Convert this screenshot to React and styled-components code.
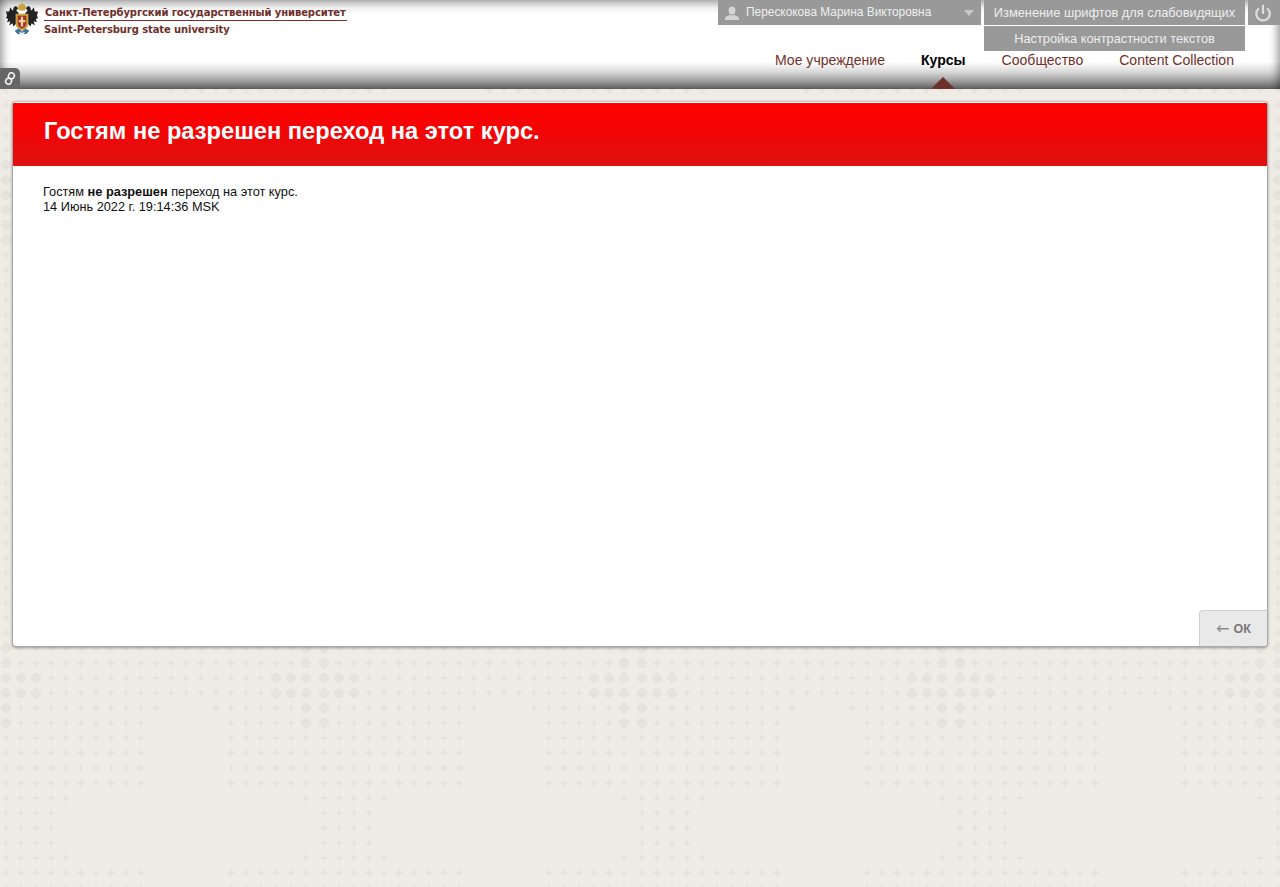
import React from "react";
import styled, { createGlobalStyle } from "styled-components";
import { Power } from "lucide-react";

// wallpaper tile: 21 x 32 cells of plus signs and clovers
const plus = (x, y) =>
  `M${x - 1} ${y - 3.5}v2.5h-2.5v2h2.5v2.5h2v-2.5h2.5v-2h-2.5v-2.5z`;
const lobe = (x, y, r) =>
  `M${x - r} ${y}a${r} ${r} 0 1 0 ${2 * r} 0a${r} ${r} 0 1 0 ${-2 * r} 0z`;
const clover = (x, y) =>
  `M${x - 3} ${y - 3}v6h6v-6z` +
  lobe(x - 2.4, y, 3) +
  lobe(x + 2.4, y, 3) +
  lobe(x, y - 2.4, 3) +
  lobe(x, y + 2.4, 3);

const inRange = (c, ranges) => ranges.some(([a, b]) => c >= a && c <= b);

function cellKind(r, c) {
  const sides = [[0, 9], [15, 20]];
  if (r === 11 || r === 12) return c === 0 || c === 20 ? "c" : "p";
  if (r === 13 || r === 14) return c <= 2 || c >= 18 ? "c" : "p";
  if (r === 15) {
    if (c === 0 || c === 20) return "c";
    return inRange(c, [[1, 10], [14, 19]]) ? "p" : "";
  }
  if (r === 16) {
    if (c === 0 || c === 20) return "c";
    return inRange(c, sides) ? "p" : "";
  }
  if (r === 21 || r === 25) return inRange(c, [[0, 4], [20, 20]]) ? "p" : "";
  if (r >= 22 && r <= 24) return c <= 3 ? "p" : "";
  if (r === 6) return inRange(c, [[0, 4], [11, 20]]) ? "p" : "";
  return inRange(c, sides) ? "p" : "";
}

function buildWallpaper() {
  let d = "";
  for (let r = 0; r < 32; r++) {
    for (let c = 0; c < 21; c++) {
      const kind = cellKind(r, c);
      if (kind === "p") d += plus(6 + c * 15, 6 + r * 15);
      if (kind === "c") d += clover(6 + c * 15, 6 + r * 15);
    }
  }
  const svg = `<svg xmlns="http://www.w3.org/2000/svg" width="318" height="483"><path fill="#e6e3dc" d="${d}"/></svg>`;
  return `url("data:image/svg+xml,${encodeURIComponent(svg)}")`;
}

const GlobalStyle = createGlobalStyle`
  html, body {
    margin: 0;
    padding: 0;
  }
  body {
    min-height: 887px;
    background-color: #efece5;
    background-image: ${buildWallpaper()};
    background-position: 0 -6px;
    font-family: "Liberation Sans", Arial, sans-serif;
    font-size: 12.75px;
    color: #111;
  }
`;

const Header = styled.header`
  height: 89px;
  display: flex;
  justify-content: space-between;
  background: linear-gradient(#b4b4b4 0, #f0f0f0 8px, #fff 14px, #fff 62px, #d8d8d8 72px, #a5a5a5 80px, #5e5e5e 89px);
  box-shadow: inset 10px 0 10px -8px rgba(0, 0, 0, 0.45),
    inset -10px 0 10px -8px rgba(0, 0, 0, 0.45);
`;

const Brand = styled.div`
  display: flex;
  flex-direction: column;
  justify-content: space-between;
`;

const Logo = styled.a`
  display: flex;
  gap: 6px;
  padding: 3px 0 0 6px;
`;

const LogoText = styled.div`
  width: 303px;
  padding-top: 2px;
  font-family: "DejaVu Sans", Verdana, sans-serif;
  font-size: 10px;
  font-weight: bold;
  color: #6e2f2a;
`;

const LogoLine = styled.div`
  line-height: ${props => (props.$first ? "15px" : "17px")};
  white-space: nowrap;
  padding-left: ${props => (props.$first ? "1px" : "0")};
  letter-spacing: ${props => (props.$first ? "-0.1px" : "-0.1px")};
  border-bottom: ${props => (props.$first ? "1px solid #7d2f2a" : "none")};
`;

const LinkTab = styled.a`
  width: 20px;
  height: 21px;
  display: flex;
  align-items: center;
  justify-content: center;
  background: #666;
  border-top-right-radius: 5px;
`;

const Side = styled.div`
  display: flex;
  flex-direction: column;
  align-items: flex-end;
`;

const TopBar = styled.div`
  display: flex;
  align-items: flex-start;
  gap: 3px;
  height: 51px;
`;

const GreyBar = styled.div`
  height: 25px;
  background: #999;
  color: #eee;
  display: flex;
  align-items: center;
`;

const UserMenu = styled(GreyBar)`
  width: 263px;
  box-sizing: border-box;
  padding: 0 7px;
  font-size: 11.9px;
  gap: 7px;
`;

const UserName = styled.span`
  flex: 1;
  white-space: nowrap;
  padding-bottom: 2px;
`;

const Caret = styled.span`
  width: 0;
  height: 0;
  border-left: 5px solid transparent;
  border-right: 5px solid transparent;
  border-top: 6px solid #c8c8c8;
`;

const A11yStack = styled.div`
  display: flex;
  flex-direction: column;
  gap: 1px;
`;

const A11yButton = styled(GreyBar)`
  width: 261px;
  justify-content: center;
  font-size: 12.8px;
  white-space: nowrap;
`;

const PowerButton = styled(GreyBar)`
  width: 32px;
  padding-right: 2px;
  box-sizing: border-box;
  justify-content: center;
  color: #dedede;
`;

const Nav = styled.nav`
  display: flex;
  padding-right: 28px;
`;

const NavItem = styled.a`
  position: relative;
  height: 38px;
  padding: 1px 18px 0;
  box-sizing: border-box;
  font-size: 14.05px;
  line-height: 16px;
  white-space: nowrap;
  color: ${props => (props.$active ? "#000" : "#73302a")};
  font-weight: ${props => (props.$active ? "bold" : "normal")};

  ${props =>
    props.$active &&
    `&::after {
      content: "";
      position: absolute;
      left: 50%;
      bottom: 0;
      margin-left: -12px;
      border-left: 12px solid transparent;
      border-right: 12px solid transparent;
      border-bottom: 12px solid #6e2f2a;
    }`}
`;

const Main = styled.main`
  padding: 12px 12px 0;
`;

const Card = styled.section`
  height: 544px;
  display: flex;
  flex-direction: column;
  background: #fff;
  border: 1px solid #a9a9a9;
  border-top-color: #c4c4c4;
  border-radius: 4px;
  box-shadow: 0 1px 3px rgba(0, 0, 0, 0.35);
  overflow: hidden;
`;

const Banner = styled.div`
  height: 63px;
  margin-top: 1px;
  padding-left: 31px;
  display: flex;
  align-items: center;
  background: linear-gradient(#ff0000, #f40404 40%, #dd1212);
`;

const Title = styled.h1`
  margin: 0 0 6px;
  font-size: 23.65px;
  font-weight: bold;
  color: #fff;
`;

const Body = styled.div`
  flex: 1;
  padding: 18px 30px 0;
  line-height: 15px;
`;

const Footer = styled.div`
  display: flex;
  justify-content: flex-end;
`;

const OkButton = styled.a`
  width: 68px;
  height: 36px;
  box-sizing: border-box;
  display: flex;
  align-items: center;
  justify-content: center;
  gap: 4px;
  background: #e9e9e9;
  border-top: 1px solid #cfcfcf;
  border-left: 1px solid #cfcfcf;
  border-top-left-radius: 4px;
  color: #777;
  font-size: 12.5px;
  font-weight: bold;
`;

const BackArrow = styled.span`
  font-family: "DejaVu Sans", sans-serif;
  font-size: 16px;
  font-weight: normal;
  color: #8c8c8c;
`;

function Emblem() {
  return (
    <svg width="32" height="32" viewBox="1 1 30 30">
      <path fill="#222" d="M14 12 9 6 7 8 5 5 4 9 1 9l1 4-1 2 2 1-1 3 3-1-1 4 3-2 1 3 3-3 2 2 2-5z" />
      <path fill="#222" d="M18 12l5-6 2 2 2-3 1 4 3 0-1 4 1 2-2 1 1 3-3-1 1 4-3-2-1 3-3-3-2 2-2-5z" />
      <circle cx="10" cy="6" r="2" fill="#222" />
      <circle cx="22" cy="6" r="2" fill="#222" />
      <path fill="#c9a43e" d="M12 6l1-3 3-2 3 2 1 3-2 2h-4z" />
      <path fill="#c9a43e" d="M10 11h12v9c0 4-3 6-6 7-3-1-6-3-6-7z" />
      <path fill="#a8322a" d="M12 13h8v7c0 3-2 4-4 5-2-1-4-2-4-5z" />
      <path fill="#e6d9a8" d="M15 14h2v3h2v2h-2v4h-2v-4h-2v-2h2z" />
      <path fill="#3d6fa5" d="M9 27l4-2 3 3 3-3 4 2-3 3h-8z" />
      <path fill="#eee" d="M13 28l3 1 3-1-2 3h-2z" />
    </svg>
  );
}

function LinkIcon() {
  return (
    <svg width="12" height="13" viewBox="0 0 12 13" fill="none" stroke="#f2f2f2" strokeWidth="1.6">
      <rect x="4.6" y="0.8" width="5.6" height="6" rx="2.6" transform="rotate(25 7.4 3.8)" />
      <rect x="1.8" y="6.2" width="5.6" height="6" rx="2.6" transform="rotate(25 4.6 9.2)" />
    </svg>
  );
}

function UserIcon() {
  return (
    <svg width="14" height="14" viewBox="0 0 14 14" fill="#d4d4d4">
      <ellipse cx="7" cy="4.6" rx="3.4" ry="4.2" />
      <path d="M0 14v-1.6C0 10.4 3 9.8 5 9l2 .8L9 9c2 .8 5 1.4 5 3.4V14z" />
    </svg>
  );
}

export default function App() {
  return (
    <>
      <GlobalStyle />
      <Header>
        <Brand>
          <Logo>
            <Emblem />
            <LogoText>
              <LogoLine $first>Санкт-Петербургский государственный университет</LogoLine>
              <LogoLine>Saint-Petersburg state university</LogoLine>
            </LogoText>
          </Logo>
          <LinkTab>
            <LinkIcon />
          </LinkTab>
        </Brand>
        <Side>
          <TopBar>
            <UserMenu>
              <UserIcon />
              <UserName>Перескокова Марина Викторовна</UserName>
              <Caret />
            </UserMenu>
            <A11yStack>
              <A11yButton>Изменение шрифтов для слабовидящих</A11yButton>
              <A11yButton>Настройка контрастности текстов</A11yButton>
            </A11yStack>
            <PowerButton>
              <Power size={18} strokeWidth={3} />
            </PowerButton>
          </TopBar>
          <Nav>
            <NavItem>Мое учреждение</NavItem>
            <NavItem $active>Курсы</NavItem>
            <NavItem>Сообщество</NavItem>
            <NavItem>Content Collection</NavItem>
          </Nav>
        </Side>
      </Header>
      <Main>
        <Card>
          <Banner>
            <Title>Гостям не разрешен переход на этот курс.</Title>
          </Banner>
          <Body>
            Гостям <b>не разрешен</b> переход на этот курс.
            <br />
            14 Июнь 2022 г. 19:14:36 MSK
          </Body>
          <Footer>
            <OkButton>
              <BackArrow>←</BackArrow>
              <span>ОК</span>
            </OkButton>
          </Footer>
        </Card>
      </Main>
    </>
  );
}
